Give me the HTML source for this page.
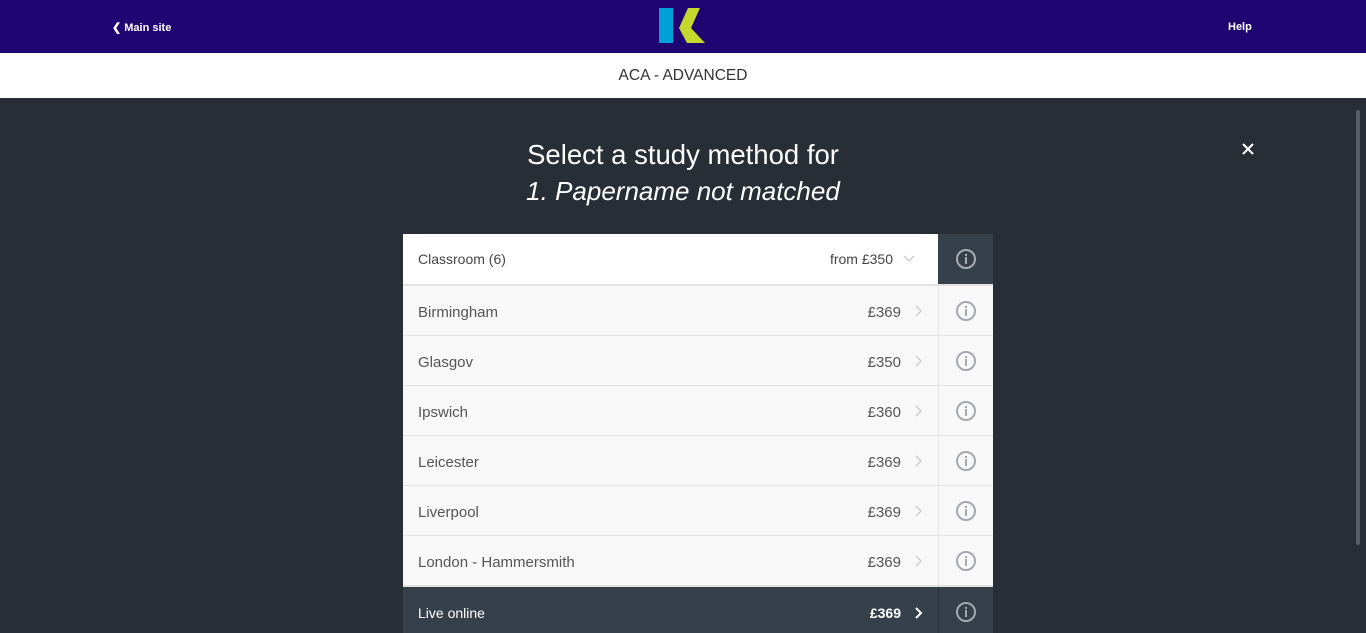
<!DOCTYPE html>
<html><head><meta charset="utf-8"><style>
*{margin:0;padding:0;box-sizing:border-box}
html,body{width:1366px;height:633px;overflow:hidden}
body{background:#272e36;font-family:"Liberation Sans",sans-serif;position:relative}
.top{position:absolute;left:0;top:0;width:1366px;height:53px;background:#1e0572}
.top .l{position:absolute;left:112px;top:21px;color:#fff;font-size:11px;font-weight:bold}
.top .r{position:absolute;left:1228px;top:21px;color:#fff;font-size:11px;font-weight:bold}
.sub{position:absolute;left:0;top:53px;width:1366px;height:45px;background:#fff;text-align:center;line-height:45px;font-size:15.5px;color:#333}
h1{position:absolute;left:0;width:1366px;text-align:center;color:#fff;font-weight:normal;font-size:27.5px}
.x{position:absolute;left:1241px;top:142px}
.sb{position:absolute;left:1356px;top:110px;width:4px;height:435px;background:#575d64;border-radius:2px}
.panel{position:absolute;left:403px;top:234px;width:590px}
.row{position:relative;height:50px;background:#f8f8f8;border-bottom:1px solid #e4e4e4;font-size:15px;color:#555}
.row .n{position:absolute;left:15px;top:18px}
.row .p{position:absolute;right:92px;top:18px}
.row .c{position:absolute;right:70px;top:19px}
.row .i{position:absolute;right:0;top:0;width:55px;height:100%;border-left:1px solid #e4e4e4;display:flex;align-items:center;justify-content:center}
.hd{height:52px;background:#fff;border-bottom:2px solid #e2e2e2;font-size:14px;color:#444}
.hd .n,.hd .p{top:17px}
.hd .i{background:#36404a;border-left:none}
.lo{height:50px;background:#36404a;color:#fff;border-bottom:none;font-size:14px}
.lo .i{border-left:1px solid #272e36}
.lo .n,.lo .p{top:18px}
</style></head><body>
<div class="top">
<div class="l">&#10094; Main site</div>
<svg style="position:absolute;left:659px;top:8px" width="47" height="36"><rect x="0" y="0" width="14" height="35" fill="#00a0d8"/><polygon points="29,0 41,0 32,20 46,35 28,35 20,20" fill="#c4d82e"/></svg>
<div class="r">Help</div>
</div>
<div class="sub">ACA - ADVANCED</div>
<h1 style="top:139px">Select a study method for</h1>
<h1 style="top:176px;font-style:italic;font-size:26px">1. Papername not matched</h1>
<svg class="x" width="14" height="14"><path d="M2 2L12 12M12 2L2 12" stroke="#fff" stroke-width="2"/></svg>
<div class="sb"></div>
<div class="panel">
<div class="row hd"><span class="n">Classroom (6)</span><span class="p" style="right:100px">from £350</span><svg class="c" style="right:78px;top:21px" width="12" height="8"><path d="M1 1L6 6L11 1" stroke="#ccc" stroke-width="1.5" fill="none"/></svg><div class="i"><svg width="22" height="22"><circle cx="11" cy="11" r="9" stroke="#a9adb3" stroke-width="2" fill="none"/><rect x="10" y="9" width="2" height="7" fill="#a9adb3"/><rect x="10" y="6" width="2" height="2" fill="#a9adb3"/></svg></div></div>
<div class="row"><span class="n">Birmingham</span><span class="p">£369</span><svg class="c" width="8" height="12"><path d="M1 1L6 6L1 11" stroke="#ccc" stroke-width="1.5" fill="none"/></svg><div class="i"><svg width="22" height="22"><circle cx="11" cy="11" r="9" stroke="#a3a9b0" stroke-width="2" fill="none"/><rect x="10" y="9" width="2" height="7" fill="#a3a9b0"/><rect x="10" y="6" width="2" height="2" fill="#a3a9b0"/></svg></div></div>
<div class="row"><span class="n">Glasgov</span><span class="p">£350</span><svg class="c" width="8" height="12"><path d="M1 1L6 6L1 11" stroke="#ccc" stroke-width="1.5" fill="none"/></svg><div class="i"><svg width="22" height="22"><circle cx="11" cy="11" r="9" stroke="#a3a9b0" stroke-width="2" fill="none"/><rect x="10" y="9" width="2" height="7" fill="#a3a9b0"/><rect x="10" y="6" width="2" height="2" fill="#a3a9b0"/></svg></div></div>
<div class="row"><span class="n">Ipswich</span><span class="p">£360</span><svg class="c" width="8" height="12"><path d="M1 1L6 6L1 11" stroke="#ccc" stroke-width="1.5" fill="none"/></svg><div class="i"><svg width="22" height="22"><circle cx="11" cy="11" r="9" stroke="#a3a9b0" stroke-width="2" fill="none"/><rect x="10" y="9" width="2" height="7" fill="#a3a9b0"/><rect x="10" y="6" width="2" height="2" fill="#a3a9b0"/></svg></div></div>
<div class="row"><span class="n">Leicester</span><span class="p">£369</span><svg class="c" width="8" height="12"><path d="M1 1L6 6L1 11" stroke="#ccc" stroke-width="1.5" fill="none"/></svg><div class="i"><svg width="22" height="22"><circle cx="11" cy="11" r="9" stroke="#a3a9b0" stroke-width="2" fill="none"/><rect x="10" y="9" width="2" height="7" fill="#a3a9b0"/><rect x="10" y="6" width="2" height="2" fill="#a3a9b0"/></svg></div></div>
<div class="row"><span class="n">Liverpool</span><span class="p">£369</span><svg class="c" width="8" height="12"><path d="M1 1L6 6L1 11" stroke="#ccc" stroke-width="1.5" fill="none"/></svg><div class="i"><svg width="22" height="22"><circle cx="11" cy="11" r="9" stroke="#a3a9b0" stroke-width="2" fill="none"/><rect x="10" y="9" width="2" height="7" fill="#a3a9b0"/><rect x="10" y="6" width="2" height="2" fill="#a3a9b0"/></svg></div></div>
<div class="row" style="border-bottom:2px solid #e2e2e2;height:51px"><span class="n">London - Hammersmith</span><span class="p">£369</span><svg class="c" width="8" height="12"><path d="M1 1L6 6L1 11" stroke="#ccc" stroke-width="1.5" fill="none"/></svg><div class="i"><svg width="22" height="22"><circle cx="11" cy="11" r="9" stroke="#a3a9b0" stroke-width="2" fill="none"/><rect x="10" y="9" width="2" height="7" fill="#a3a9b0"/><rect x="10" y="6" width="2" height="2" fill="#a3a9b0"/></svg></div></div>
<div class="row lo"><span class="n">Live online</span><span class="p" style="font-weight:bold">£369</span><svg class="c" style="top:20px" width="8" height="12"><path d="M1 1L6 6L1 11" stroke="#fff" stroke-width="2" fill="none"/></svg><div class="i"><svg width="22" height="22"><circle cx="11" cy="11" r="9" stroke="#a3a9b0" stroke-width="2" fill="none"/><rect x="10" y="9" width="2" height="7" fill="#a3a9b0"/><rect x="10" y="6" width="2" height="2" fill="#a3a9b0"/></svg></div></div>
</div>
</body></html>
